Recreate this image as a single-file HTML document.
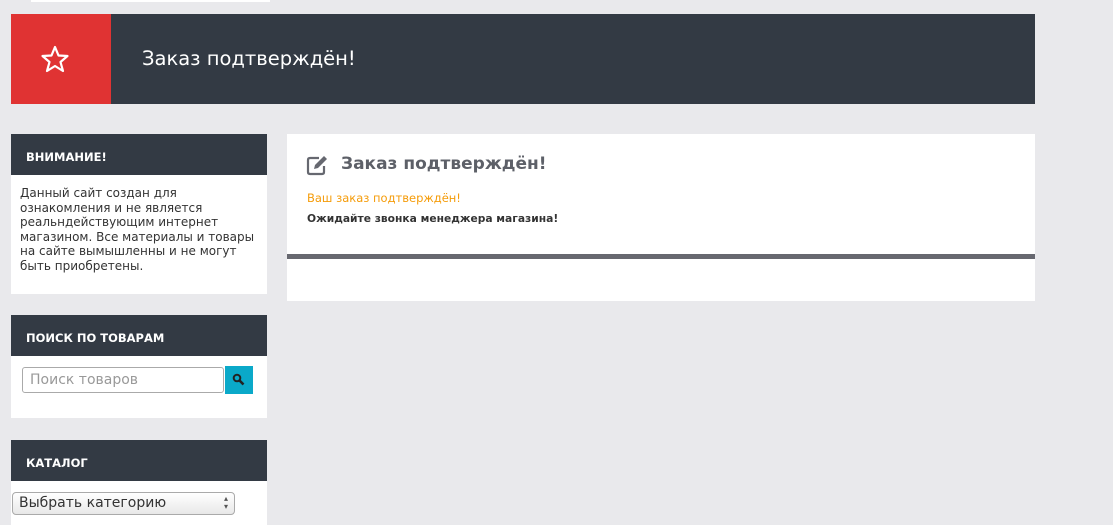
<!DOCTYPE html>
<html><head><meta charset="utf-8"><style>
*{box-sizing:border-box;margin:0;padding:0}
body{width:1113px;height:525px;overflow:hidden;background:#e9e9ec;font-family:"DejaVu Sans","Liberation Sans",sans-serif;position:relative}
.abs{position:absolute}
.hdr{background:#333a44;color:#fff}
.w{background:#fff}
.bt{font-weight:bold;font-size:11.5px;color:#fff;padding-left:15px}
</style></head><body>
<div class="abs w" style="left:31px;top:0;width:239px;height:2px"></div>
<div class="abs hdr" style="left:11px;top:14px;width:1024px;height:90px"></div>
<div class="abs" style="left:11px;top:14px;width:100px;height:90px;background:#e03333"></div>
<svg class="abs" style="left:40px;top:45px" width="30" height="28" viewBox="0 0 30 28"><path d="M15 2 L18.5 10.5 L27.5 11 L20.5 17 L23 26 L15 21 L7 26 L9.5 17 L2.5 11 L11.5 10.5 Z" fill="none" stroke="#fff" stroke-width="2.2" stroke-linejoin="round"/></svg>
<div class="abs" style="left:142px;top:47px;color:#fff;font-size:19.5px">Заказ подтверждён!</div>

<div class="abs hdr" style="left:11px;top:134px;width:256px;height:41px"><div class="bt" style="line-height:46px">ВНИМАНИЕ!</div></div>
<div class="abs w" style="left:11px;top:175px;width:256px;height:119px;padding:11px 9px;font-size:12px;line-height:14.5px;color:#333">Данный сайт создан для ознакомления и не является реальндействующим интернет магазином. Все материалы и товары на сайте вымышленны и не могут быть приобретены.</div>

<div class="abs hdr" style="left:11px;top:315px;width:256px;height:41px"><div class="bt" style="line-height:46px">ПОИСК ПО ТОВАРАМ</div></div>
<div class="abs w" style="left:11px;top:356px;width:256px;height:62px"></div>
<div class="abs" style="left:22px;top:367px;width:202px;height:26px;border:1px solid #aaa;border-radius:3px;background:#fff;font-size:14px;color:#999;padding:4px 7px">Поиск товаров</div>
<div class="abs" style="left:225px;top:366px;width:28px;height:28px;background:#0aa9c9"></div>
<svg class="abs" style="left:232px;top:373px" width="14" height="14" viewBox="0 0 14 14"><circle cx="5" cy="5" r="3.3" fill="none" stroke="#222" stroke-width="2"/><path d="M7.5 7.5 L11.5 11.5" stroke="#222" stroke-width="2.6"/></svg>

<div class="abs hdr" style="left:11px;top:440px;width:256px;height:41px"><div class="bt" style="line-height:46px">КАТАЛОГ</div></div>
<div class="abs w" style="left:11px;top:481px;width:256px;height:44px"></div>
<div class="abs" style="left:12px;top:492px;width:223px;height:23px;border:1px solid #aaa;border-radius:4px;background:linear-gradient(#fff,#e8e8e8);font-size:14px;color:#333;padding:2px 6px">Выбрать категорию<span style="position:absolute;right:6px;top:2px;font-size:8px;line-height:8px;color:#555">▴<br>▾</span></div>

<div class="abs w" style="left:287px;top:134px;width:748px;height:167px"></div>
<svg class="abs" style="left:306px;top:154px" width="23" height="22" viewBox="0 0 23 22"><path d="M13 4 H4 Q2 4 2 6 V18 Q2 20 4 20 H16 Q18 20 18 18 V12" fill="none" stroke="#666870" stroke-width="2.2"/><path d="M8 15 L9 11 L18 2 L21 5 L12 14 Z" fill="#666870"/></svg>
<div class="abs" style="left:341px;top:154px;font-size:17px;font-weight:bold;color:#5d6068">Заказ подтверждён!</div>
<div class="abs" style="left:307px;top:191px;font-size:11.5px;color:#f59c0a">Ваш заказ подтверждён!</div>
<div class="abs" style="left:307px;top:212px;font-size:10.7px;font-weight:bold;color:#333">Ожидайте звонка менеджера магазина!</div>
<div class="abs" style="left:287px;top:254px;width:748px;height:5px;background:#676870"></div>
</body></html>
